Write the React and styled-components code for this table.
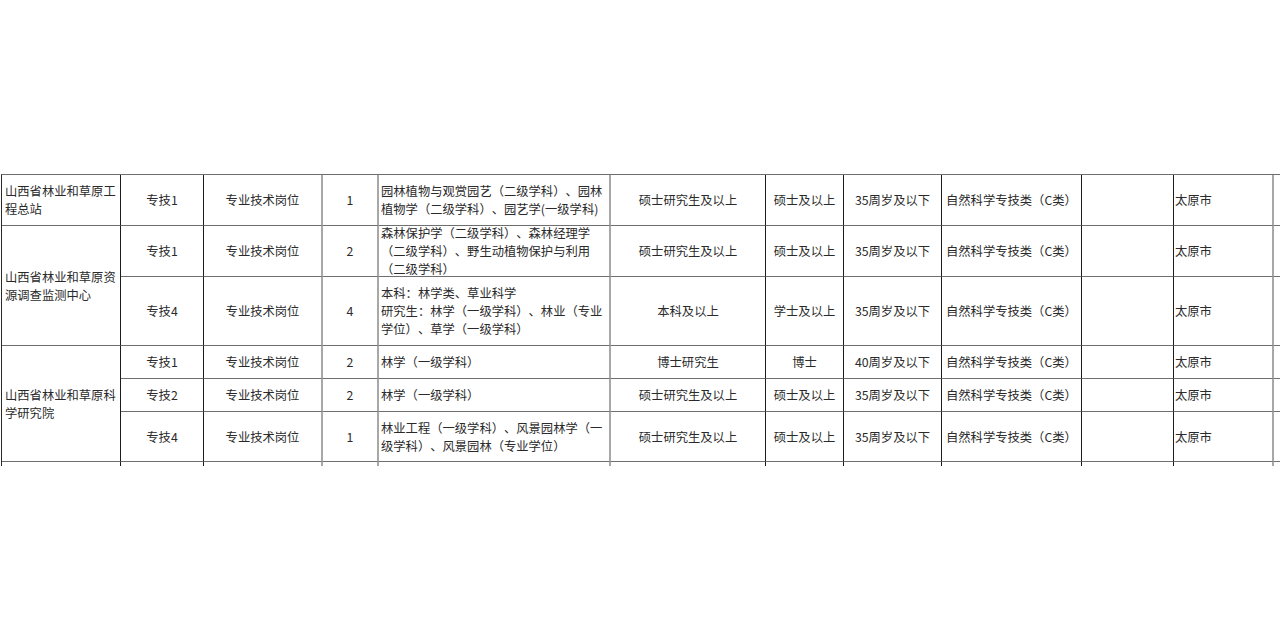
import styled, { createGlobalStyle } from 'styled-components';

const GlobalStyle = createGlobalStyle`
  html, body {
    margin: 0;
    padding: 0;
    background: #ffffff;
    overflow: hidden;
  }
  body {
    font-family: "Noto Sans CJK SC", "Microsoft YaHei", sans-serif;
  }
`;

const Page = styled.div`
  width: 1280px;
  height: 640px;
  padding: 174px 0 0 1px;
  box-sizing: border-box;
  overflow: hidden;
  background: #fff;
`;

const Sheet = styled.div`
  display: grid;
  grid-template-columns: 119px 83px 119px 56px 232px 155px 78px 98px 140px 92px 100px 120px;
  grid-template-rows: 51px 51px 69px 33px 33px 50px 4px;
  width: max-content;
  border-top: 1px solid #6e6e6e;
  border-left: 1px solid #2a2a2a;
`;

const lineColors = {
  dark: '1px solid #1c1c1c',
  grey: '2px solid #a8a8a8',
};

const Cell = styled.div`
  box-sizing: border-box;
  display: flex;
  align-items: center;
  justify-content: ${p => (p.$align === 'center' ? 'center' : 'flex-start')};
  text-align: ${p => (p.$align === 'center' ? 'center' : 'left')};
  padding: 0 0 0 ${p => p.$pl ?? 2}px;
  border-right: ${p => lineColors[p.$line || 'dark']};
  border-bottom: ${p => (p.$open ? 'none' : '1px solid #6e6e6e')};
  grid-row: ${p => p.$row || 'auto'};
  grid-column: ${p => p.$col};
  overflow: hidden;
  font-size: 12.3px;
  line-height: 18px;
  color: #2a2a2a;
  white-space: nowrap;
  text-spacing-trim: space-all;
`;

const Lines = styled.div`
  display: flex;
  flex-direction: column;
`;

const columns = [
  { key: 'unit', align: 'left', line: 'dark', pl: 3 },
  { key: 'code', align: 'center', line: 'dark', pl: 0 },
  { key: 'type', align: 'center', line: 'grey', pl: 0 },
  { key: 'count', align: 'center', line: 'grey', pl: 0 },
  { key: 'major', align: 'left', line: 'grey', pl: 2 },
  { key: 'edu', align: 'center', line: 'dark', pl: 0 },
  { key: 'degree', align: 'center', line: 'dark', pl: 0 },
  { key: 'age', align: 'center', line: 'dark', pl: 0 },
  { key: 'exam', align: 'left', line: 'dark', pl: 4 },
  { key: 'other', align: 'left', line: 'dark' },
  { key: 'city', align: 'left', line: 'grey', pl: 1 },
  { key: 'note', align: 'left', line: 'dark' },
];

const units = [
  { name: ['山西省林业和草原工', '程总站'], rows: '1 / 2' },
  { name: ['山西省林业和草原资', '源调查监测中心'], rows: '2 / 4' },
  { name: ['山西省林业和草原科', '学研究院'], rows: '4 / 7' },
];

const posts = [
  {
    code: '专技1', count: '1',
    major: ['园林植物与观赏园艺（二级学科）、园林', '植物学（二级学科）、园艺学(一级学科)'],
    edu: '硕士研究生及以上', degree: '硕士及以上', age: '35周岁及以下',
  },
  {
    code: '专技1', count: '2',
    major: ['森林保护学（二级学科）、森林经理学', '（二级学科）、野生动植物保护与利用', '（二级学科）'],
    edu: '硕士研究生及以上', degree: '硕士及以上', age: '35周岁及以下',
  },
  {
    code: '专技4', count: '4',
    major: ['本科：林学类、草业科学', '研究生：林学（一级学科）、林业（专业', '学位）、草学（一级学科）'],
    edu: '本科及以上', degree: '学士及以上', age: '35周岁及以下',
  },
  {
    code: '专技1', count: '2',
    major: ['林学（一级学科）'],
    edu: '博士研究生', degree: '博士', age: '40周岁及以下',
  },
  {
    code: '专技2', count: '2',
    major: ['林学（一级学科）'],
    edu: '硕士研究生及以上', degree: '硕士及以上', age: '35周岁及以下',
  },
  {
    code: '专技4', count: '1',
    major: ['林业工程（一级学科）、风景园林学（一', '级学科）、风景园林（专业学位）'],
    edu: '硕士研究生及以上', degree: '硕士及以上', age: '35周岁及以下',
  },
];

const TextLines = ({ lines }) => (
  <Lines>
    {lines.map((l, i) => (
      <span key={i}>{l}</span>
    ))}
  </Lines>
);

const App = () => {
  const colProps = i => ({
    $align: columns[i].align,
    $line: columns[i].line,
    $pl: columns[i].pl,
    $col: `${i + 1}`,
  });

  return (
    <Page>
      <GlobalStyle />
      <Sheet>
        {units.map(u => (
          <Cell key={u.rows} {...colProps(0)} $row={u.rows}>
            <TextLines lines={u.name} />
          </Cell>
        ))}
        {posts.map((p, r) => {
          const row = `${r + 1}`;
          const values = [
            p.code, '专业技术岗位', p.count, <TextLines lines={p.major} />,
            p.edu, p.degree, p.age, '自然科学专技类（C类）', '', '太原市', '',
          ];
          return values.map((v, i) => (
            <Cell key={`${r}-${i}`} {...colProps(i + 1)} $row={row}>
              {v}
            </Cell>
          ));
        })}
        {columns.map((c, i) => (
          <Cell key={`tail-${i}`} {...colProps(i)} $row="7" $open />
        ))}
      </Sheet>
    </Page>
  );
};

export default App;
